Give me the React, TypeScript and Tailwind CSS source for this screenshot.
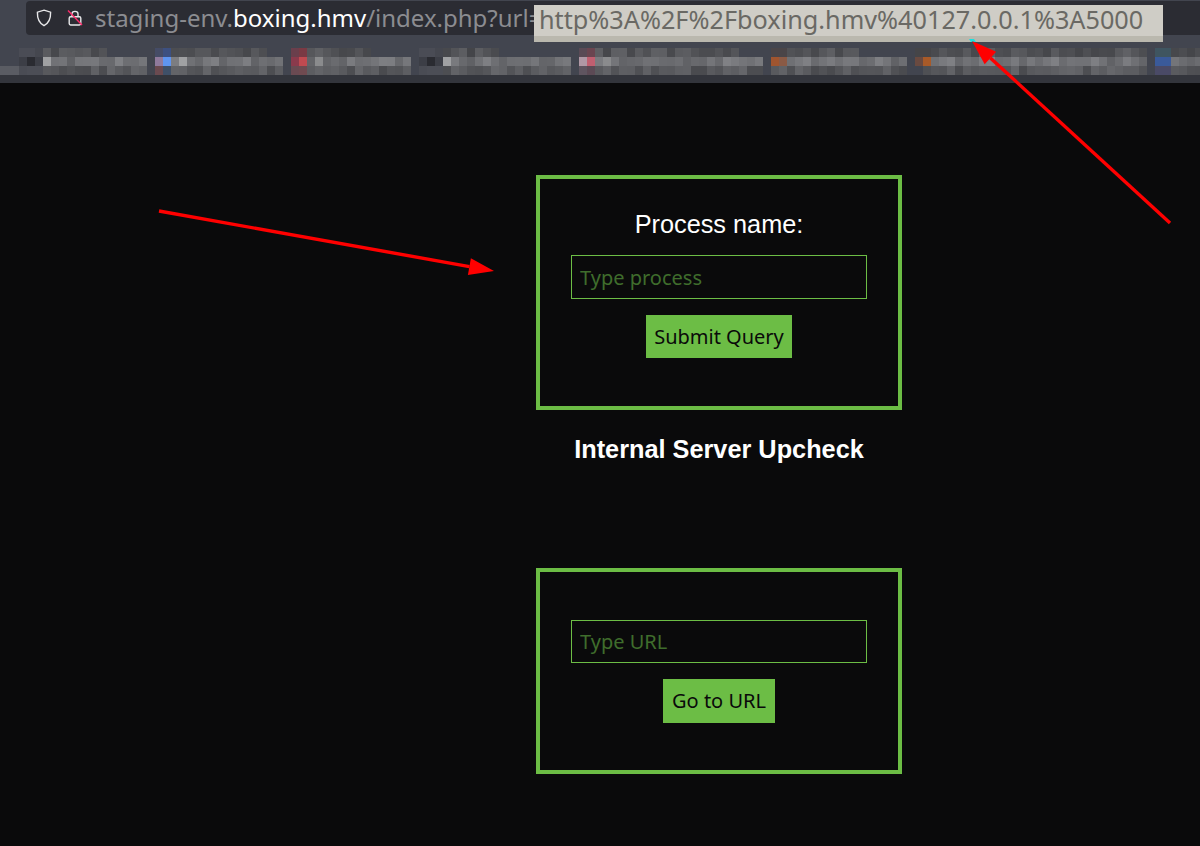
const barBg = '#42454f'

// mosaic over the blurred bookmarks row
const segments: [number, number, number][] = [
  // start x, end x, end x of the top row
  [19, 147, 107],
  [155, 283, 267],
  [291, 411, 371],
  [419, 571, 499],
  [579, 763, 739],
  [771, 907, 859],
  [916, 1147, 1147],
  [1156, 1200, 1200],
]

const accents: Record<string, string> = {
  '19,0': '#4a4c55', '27,0': '#4a4c55', '35,0': '#45474f',
  '19,1': '#3c3e46', '27,1': '#2a2b31', '35,1': '#3c3e46', '19,2': '#4a4c54', '27,2': '#4c4e56', '35,2': '#4c4e56',
  '419,0': '#4a4c55', '427,0': '#4a4c55', '435,0': '#45474f',
  '419,1': '#3c3e46', '427,1': '#2a2b31', '435,1': '#3c3e46', '419,2': '#4a4c54', '427,2': '#4c4e56', '435,2': '#4c4e56',
  '155,0': '#454c66', '163,0': '#3d5080', '155,1': '#8f7a9c', '163,1': '#5f95f0', '155,2': '#6a4a50', '163,2': '#3f5068',
  '291,0': '#6a3f4c', '299,0': '#7a3a44', '291,1': '#8a3a4c', '299,1': '#c04a50', '291,2': '#6a4a52', '299,2': '#6f4a50',
  '579,0': '#5a4a55', '587,0': '#6a4550', '579,1': '#b098a5', '587,1': '#c05f70', '579,2': '#5f5560', '587,2': '#5c4a55',
  '771,0': '#4a4548', '779,0': '#4a4548', '771,1': '#a0552f', '779,1': '#8a5a45',
  '915,1': '#6a4a40', '923,1': '#a85a28', '915,0': '#454548', '923,0': '#454548',
  '1155,0': '#3f5560', '1163,0': '#3f5560', '1155,1': '#3a5a9a', '1163,1': '#3a5a9a', '1155,2': '#4a4a66', '1163,2': '#4a4a66',
  '43,1': '#a0a1a3', '179,1': '#a0a1a3', '315,1': '#8a8b8d', '443,1': '#a0a1a3', '603,1': '#8a8b8d',
}

function cellColor(x: number, row: number) {
  const key = `${x},${row}`
  if (accents[key]) return accents[key]
  const seg = segments.find(([a, b]) => x >= a && x < b)
  const inRow = seg && (row > 0 || x < seg[2])
  if (!inRow) return row === 2 && x < 19 ? '#5a5c63' : barBg
  const n = Math.abs(Math.sin(x * 12.9898 + row * 78.233) * 43758.5453) % 1
  const base = row === 1 ? 96 : row === 2 ? 74 : 68
  const v = Math.round(base + n * (row === 1 ? 32 : 28))
  return `rgb(${v},${v + 1},${v + 5})`
}

function Mosaic() {
  const cells = []
  for (let row = 0; row < 3; row++) {
    for (let x = -5; x < 1200; x += 8) {
      cells.push(<rect key={`${x}-${row}`} x={x} y={row * 9} width={8} height={9} fill={cellColor(x, row)} />)
    }
  }
  return (
    <svg width={1200} height={27} shapeRendering="crispEdges" className="block">
      {cells}
    </svg>
  )
}

function ShieldIcon() {
  return (
    <svg width="16" height="18" viewBox="0 0 16 18" fill="none" stroke="#e8e8ea" strokeWidth="1.4">
      <path d="M8 1.2 L14.6 3.2 C14.8 9.5 13 14 8 16.6 C3 14 1.2 9.5 1.4 3.2 Z" />
    </svg>
  )
}

function LockIcon() {
  return (
    <svg width="16" height="18" viewBox="0 0 16 18" fill="none">
      <path d="M5 7.5 V4.8 C5 1.6 11 1.6 11 4.8 V7.5" stroke="#e8e8ea" strokeWidth="1.4" />
      <rect x="2.2" y="7.8" width="11.6" height="8.2" rx="1.4" stroke="#e8e8ea" strokeWidth="1.4" />
      <path d="M1 1.5 L15 16" stroke="#ff2a6a" strokeWidth="1.4" />
    </svg>
  )
}

function Arrow({ x1, y1, x2, y2 }: { x1: number; y1: number; x2: number; y2: number }) {
  const angle = Math.atan2(y2 - y1, x2 - x1)
  const len = 25
  const wing = 8.5
  const bx = x2 - Math.cos(angle) * len
  const by = y2 - Math.sin(angle) * len
  const px = -Math.sin(angle) * wing
  const py = Math.cos(angle) * wing
  return (
    <g>
      <line x1={x1} y1={y1} x2={bx} y2={by} stroke="#ff0000" strokeWidth="3.4" />
      <polygon points={`${x2},${y2} ${bx + px},${by + py} ${bx - px},${by - py}`} fill="#ff0000" />
    </g>
  )
}

function Panel({ className, children }: { className: string; children: React.ReactNode }) {
  return <div className={`border-4 border-[#6cbd45] flex flex-col items-center ${className}`}>{children}</div>
}

function Field({ placeholder, className }: { placeholder: string; className: string }) {
  return (
    <input
      placeholder={placeholder}
      className={`block w-[296px] bg-transparent border border-[#6cbd45] px-2 text-[20px] outline-none placeholder:text-[#3f6d2c] font-['Noto_Sans',sans-serif] ${className}`}
    />
  )
}

function SubmitButton({ label, className }: { label: string; className: string }) {
  return (
    <button className={`bg-[#6cbd45] text-[#0a0a0a] text-[20px] flex items-center justify-center font-['Noto_Sans',sans-serif] ${className}`}>
      {label}
    </button>
  )
}

export default function App() {
  return (
    <div className="relative w-[1200px] h-[846px] overflow-hidden bg-[#0a0a0b] font-['Liberation_Sans',sans-serif]">
      <header className="h-[83px] bg-[#42454f] flex flex-col">
        <div className="h-[48px] pt-px">
          <div className="ml-[26px] h-[34px] bg-[#2b2c33] rounded-tl-sm rounded-bl-sm flex items-center">
            <div className="w-[69px] pl-[10px] flex items-center gap-[15px] shrink-0">
              <ShieldIcon />
              <LockIcon />
            </div>
            <div className="flex items-center text-[24px] whitespace-nowrap font-['Noto_Sans',sans-serif]">
              <span className="text-[#8b8c91]">staging-env.</span>
              <span className="text-white">boxing.hmv</span>
              <span className="text-[#8b8c91]">/index.php?url=</span>
            </div>
          </div>
          <div className="absolute left-[534px] top-[5px] w-[629px] h-[37px] bg-[#cfcdc6] border-b-[6px] border-[#bab8ae] pl-[5px] text-[25.25px] leading-[28px] text-[#6a6964] whitespace-nowrap font-['Noto_Sans',sans-serif]">
            http%3A%2F%2Fboxing.hmv%40127.0.0.1%3A5000
          </div>
        </div>
        <Mosaic />
        <div className="flex-1 bg-[#33353c]" />
      </header>

      <main className="w-[366px] ml-[536px] flex flex-col items-center pt-[92px]">
        <Panel className="w-full h-[235px] pt-[30px]">
          <p className="text-white text-[25.3px] leading-[30px]">Process name:</p>
          <Field placeholder="Type process" className="h-[44px] mt-[16px]" />
          <SubmitButton label="Submit Query" className="w-[146px] h-[43px] mt-[16px]" />
        </Panel>
        <h1 className="text-white font-bold text-[25.3px] leading-[30px] mt-[24px]">Internal Server Upcheck</h1>
        <Panel className="w-full h-[206px] mt-[104px] pt-[48px]">
          <Field placeholder="Type URL" className="h-[43px]" />
          <SubmitButton label="Go to URL" className="w-[112px] h-[44px] mt-[16px]" />
        </Panel>
      </main>

      <svg width="1200" height="846" className="absolute inset-0 pointer-events-none">
        <polygon points="969,39 974,39 976,42 971,42" fill="#19e0e0" />
        <Arrow x1={159} y1={211} x2={494} y2={271} />
        <Arrow x1={1170} y1={223} x2={972} y2={41} />
      </svg>
    </div>
  )
}
